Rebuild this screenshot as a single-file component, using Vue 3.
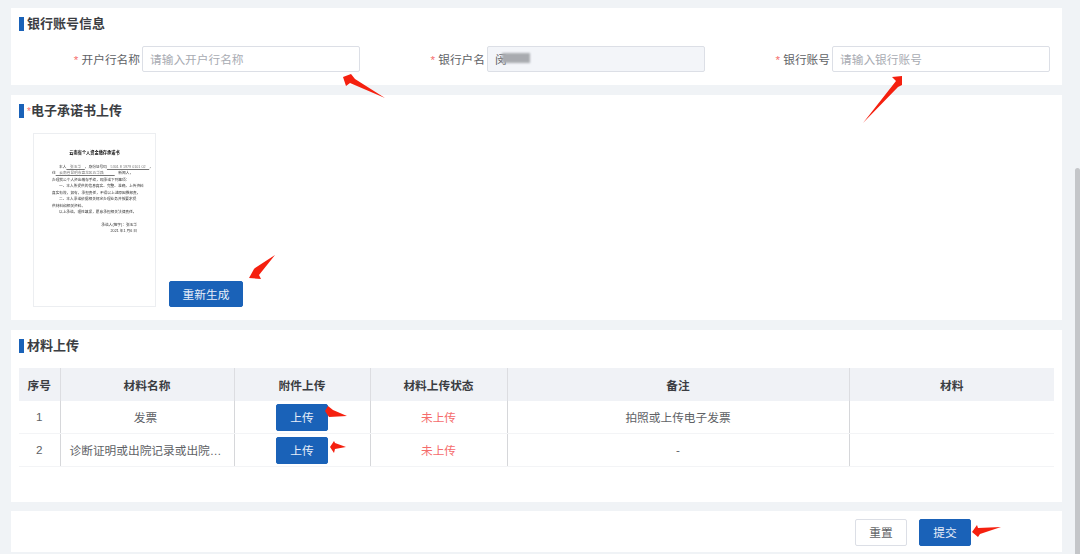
<script setup>
const fields = [
  { label: '开户行名称', placeholder: '请输入开户行名称' },
  { label: '银行户名', value: '闵', disabled: true },
  { label: '银行账号', placeholder: '请输入银行账号' },
]

const rows = [
  { no: 1, name: '发票', status: '未上传', remark: '拍照或上传电子发票' },
  { no: 2, name: '诊断证明或出院记录或出院小结', status: '未上传', remark: '-' },
]

// Red hand-drawn annotation arrows, page coordinates
const arrows = [
  '385,98 355,79 351,74 343,77 346,86 350,83',
  '902,76 892,77 896,81 863,123 898,87 902,85',
  '275,255 255,268 254,269 249,278 261,279 259,275',
  '347,416 333,410 328,406 325,411 329,417',
  '346,447 335,443 334,441 330,447 334,453 335,449',
  '1001,527 978,528 977,525 972,532 978,537 980,534',
]
</script>

<template>
  <div class="page">
    <section class="card bank">
      <h3 class="title">银行账号信息</h3>
      <div class="form">
        <div v-for="f in fields" :key="f.label" class="field">
          <label><i>*</i> {{ f.label }}</label>
          <div :class="['input', { disabled: f.disabled }]">
            <template v-if="f.disabled">{{ f.value }}<span class="mask"></span></template>
            <span v-else class="ph">{{ f.placeholder }}</span>
          </div>
        </div>
      </div>
    </section>

    <section class="card promise">
      <h3 class="title"><i>*</i>电子承诺书上传</h3>
      <div class="promise-row">
        <div class="doc">
          <div class="doc-inner">
            <div class="doc-title">云南省个人资金缴存承诺书</div>
            <p class="ind">本人<u>　张玉华　</u>，身份证号码<u>　5301 8 1979 0101 02　</u>，</p>
            <p>住<u>　云南省昆明市盘龙区五华路　　　</u>　新闻人，</p>
            <p>办理我公个人资金缴存手续，现承诺下列事项：</p>
            <p class="ind">一、本人所提供的信息真实、完整、准确，上传资料</p>
            <p>真实有效，如有，承担责任，不得以上述原因推卸责。</p>
            <p class="ind">二、本人承诺依据相关规定办理业务并按要求提</p>
            <p>供材料和相关资料。</p>
            <p class="ind">以上承诺，理性填报，愿意承担相关法律责任。</p>
            <p class="sign">承诺人(签字)：张玉华</p>
            <p class="sign">2021 年1 月6 日</p>
          </div>
        </div>
        <button class="btn primary regen">重新生成</button>
      </div>
    </section>

    <section class="card material">
      <h3 class="title">材料上传</h3>
      <table class="tbl">
        <colgroup>
          <col style="width: 41px" />
          <col style="width: 174px" />
          <col style="width: 136px" />
          <col style="width: 137px" />
          <col style="width: 342px" />
          <col />
        </colgroup>
        <thead>
          <tr>
            <th>序号</th>
            <th>材料名称</th>
            <th>附件上传</th>
            <th>材料上传状态</th>
            <th>备注</th>
            <th>材料</th>
          </tr>
        </thead>
        <tbody>
          <tr v-for="r in rows" :key="r.no">
            <td class="txt">{{ r.no }}</td>
            <td class="txt"><div class="name">{{ r.name }}</div></td>
            <td><button class="btn primary up">上传</button></td>
            <td class="txt status">{{ r.status }}</td>
            <td class="txt">{{ r.remark }}</td>
            <td></td>
          </tr>
        </tbody>
      </table>
    </section>

    <section class="card footer">
      <button class="btn plain">重置</button>
      <button class="btn primary">提交</button>
    </section>

    <div class="scrollbar"></div>

    <svg class="marks" viewBox="0 0 1080 554">
      <polygon v-for="p in arrows" :key="p" :points="p" fill="#f5200f" />
    </svg>
  </div>
</template>

<style>
html, body { margin: 0; background: #f0f3f6; overflow: hidden; }
</style>

<style scoped>
.page {
  position: relative;
  height: 554px;
  box-sizing: border-box;
  padding: 8px 18px 0 11px;
  display: flex;
  flex-direction: column;
  gap: 10px;
  background: #f0f3f6;
  font-family: "Liberation Sans", "Noto Sans CJK SC", sans-serif;
  font-size: 11.7px;
  color: #606266;
  overflow: hidden;
}

.card {
  background: #fff;
  box-sizing: border-box;
  flex: none;
}

.title {
  margin: 0 0 0 8px;
  height: 14px;
  line-height: 14px;
  padding-left: 3px;
  border-left: 5px solid #1a62b8;
  font-size: 13px;
  font-weight: 700;
  color: #3b3d42;
}
.title i { color: #f56c6c; font-style: normal; font-weight: 400; font-size: 10px; }

.bank { height: 77px; padding-top: 9px; }
.form {
  display: grid;
  grid-template-columns: repeat(3, 345px);
  margin: 15px 0 0 4px;
}
.field { display: flex; align-items: center; }
.field label {
  width: 127px;
  box-sizing: border-box;
  padding: 0 2px 2px 0;
  text-align: right;
  white-space: nowrap;
}
.field label i { color: #f56c6c; font-style: normal; }
.input {
  width: 218px;
  height: 26px;
  box-sizing: border-box;
  padding: 0 7px 2px;
  border: 1px solid #dcdfe6;
  border-radius: 2px;
  background: #fff;
  display: flex;
  align-items: center;
}
.input.disabled { background: #f3f5f9; }
.ph { color: #a8abb2; }
.mask {
  width: 28px;
  height: 10px;
  margin-left: -5px;
  background: #a9abb0;
  filter: blur(1px);
}

.promise { height: 225px; padding-top: 9px; }
.promise-row {
  display: flex;
  align-items: flex-end;
  gap: 13px;
  margin: 15px 0 0 22px;
}
.doc {
  width: 123px;
  height: 174px;
  box-sizing: border-box;
  border: 1px solid #eceef1;
  padding: 16px 18px 0 18px;
}
.doc-inner {
  font-size: 3.7px;
  line-height: 6.5px;
  color: #333;
  filter: blur(0.5px);
}
.doc-inner p { margin: 0; white-space: nowrap; }
.doc-inner u { color: #777; text-underline-offset: 0.6px; }
.doc-title { text-align: center; font-size: 4.2px; font-weight: 700; margin-bottom: 7px; color: #111; }
.doc-inner .ind { padding-left: 7px; }
.doc-inner .sign { text-align: right; }
.doc-inner .sign:nth-last-child(2) { margin-top: 6px; }

.btn {
  font-family: inherit;
  font-size: 11.7px;
  width: 52px;
  height: 27px;
  padding: 0 0 2px;
  border-radius: 2px;
  cursor: pointer;
  box-sizing: border-box;
}
.btn.primary { background: #1a62b8; border: 1px solid #1a62b8; color: #e8eef8; }
.btn.plain { background: #fff; border: 1px solid #dcdfe6; color: #606266; }
.regen { width: 74px; height: 26px; }

.material { height: 172px; padding-top: 9px; }
.tbl {
  width: 1035px;
  margin: 15px 0 0 8px;
  border-collapse: collapse;
  table-layout: fixed;
}
.tbl th {
  height: 33px;
  padding: 0;
  background: #f0f2f6;
  color: #3b3d42;
  font-weight: 700;
  font-size: 11.7px;
  border-right: 1px solid #dcdde1;
}
.tbl td {
  height: 32px;
  padding: 0;
  text-align: center;
  border-right: 1px solid #d6d7da;
  border-bottom: 1px solid #f3f4f6;
}
.tbl td.txt { padding-bottom: 2px; height: 30px; }
.tbl th:last-child, .tbl td:last-child { border-right: 0; }
.name {
  padding: 0 12px 0 9px;
  overflow: hidden;
  white-space: nowrap;
  text-overflow: ellipsis;
}
.status { color: #f56c6c; }
.up { display: block; margin: 0 auto; }

.footer {
  height: 41px;
  margin-top: -1px;
  display: flex;
  justify-content: flex-end;
  align-items: flex-start;
  gap: 12px;
  padding: 8px 91px 0 0;
}

.scrollbar {
  position: absolute;
  left: 1075px;
  top: 168px;
  width: 5px;
  height: 386px;
  border-radius: 3px 3px 0 0;
  background: #c4c6c9;
}

.marks {
  position: absolute;
  left: 0;
  top: 0;
  width: 1080px;
  height: 554px;
  pointer-events: none;
}
</style>
